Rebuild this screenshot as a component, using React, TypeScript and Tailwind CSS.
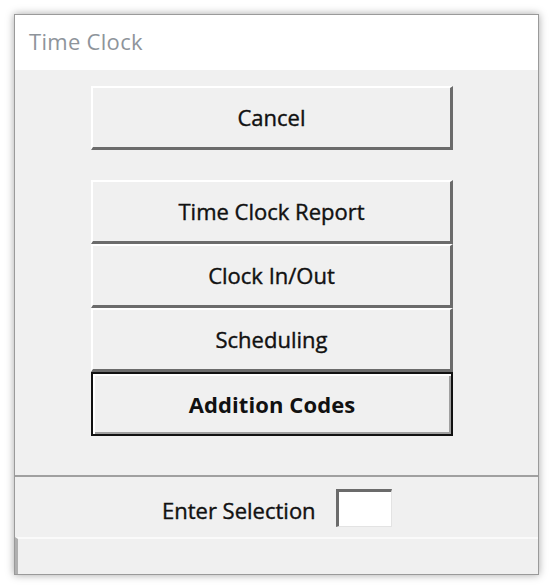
import React from "react";

const font = { fontFamily: '"Open Sans", "Noto Sans", "Liberation Sans", sans-serif' };

function Btn({ label, bold, className = "" }: { label: string; bold?: boolean; className?: string }) {
  if (bold) {
    return (
      <div
        className={`h-[64px] w-[362px] flex items-center justify-center border-2 border-[#111] shadow-[inset_2px_2px_0_#ffffff,inset_-2px_-2px_0_#a0a0a0] text-[22px] font-bold tracking-[0.1px] text-[#111] ${className}`}
      >
        {label}
      </div>
    );
  }
  return (
    <div
      className={`h-[64px] w-[362px] flex items-center justify-center border-t-2 border-l-2 border-t-white border-l-white border-r-[3px] border-b-[3px] border-r-[#6b6b6b] border-b-[#6b6b6b] text-[22px] [-webkit-text-stroke:0.4px_#111] text-[#111] ${className}`}
    >
      {label}
    </div>
  );
}

export default function App() {
  return (
    <div className="w-[552px] h-[588px] bg-white pt-[14px] pl-[14px]" style={font}>
      <div className="w-[525px] h-[561px] border border-[#9a9a9a] shadow-[0_0_8px_rgba(0,0,0,0.35)] flex flex-col bg-[#f0f0f0]">
        <div className="h-[55px] bg-white flex items-center pl-[14px] pb-[3px] shrink-0">
          <span className="text-[22px] text-[#8e949b] tracking-[0.3px]">Time Clock</span>
        </div>
        <div className="h-[405px] shrink-0 pl-[76px] pt-[16px] flex flex-col">
          <Btn label="Cancel" />
          <div className="h-[30px]" />
          <Btn label="Time Clock Report" />
          <Btn label="Clock In/Out" />
          <Btn label="Scheduling" />
          <Btn label="Addition Codes" bold />
        </div>
        <div className="h-[2px] bg-[#a0a0a0] shrink-0" />
        <div className="h-[60px] shrink-0 flex items-center pl-[147px] gap-[20px]">
          <span className="text-[22px] [-webkit-text-stroke:0.4px_#111] text-[#111] pt-[6px]">Enter Selection</span>
          <div className="w-[56px] h-[38px] mt-[2px] bg-white border-t-[3px] border-l-[3px] border-t-[#6b6b6b] border-l-[#6b6b6b] border-r border-b border-r-[#e3e3e3] border-b-[#e3e3e3]" />
        </div>
        <div className="flex-1 border-t-2 border-t-[#fafafa] border-l-[3px] border-l-[#b0b0b0] bg-[#f0f0f0]" />
      </div>
    </div>
  );
}
